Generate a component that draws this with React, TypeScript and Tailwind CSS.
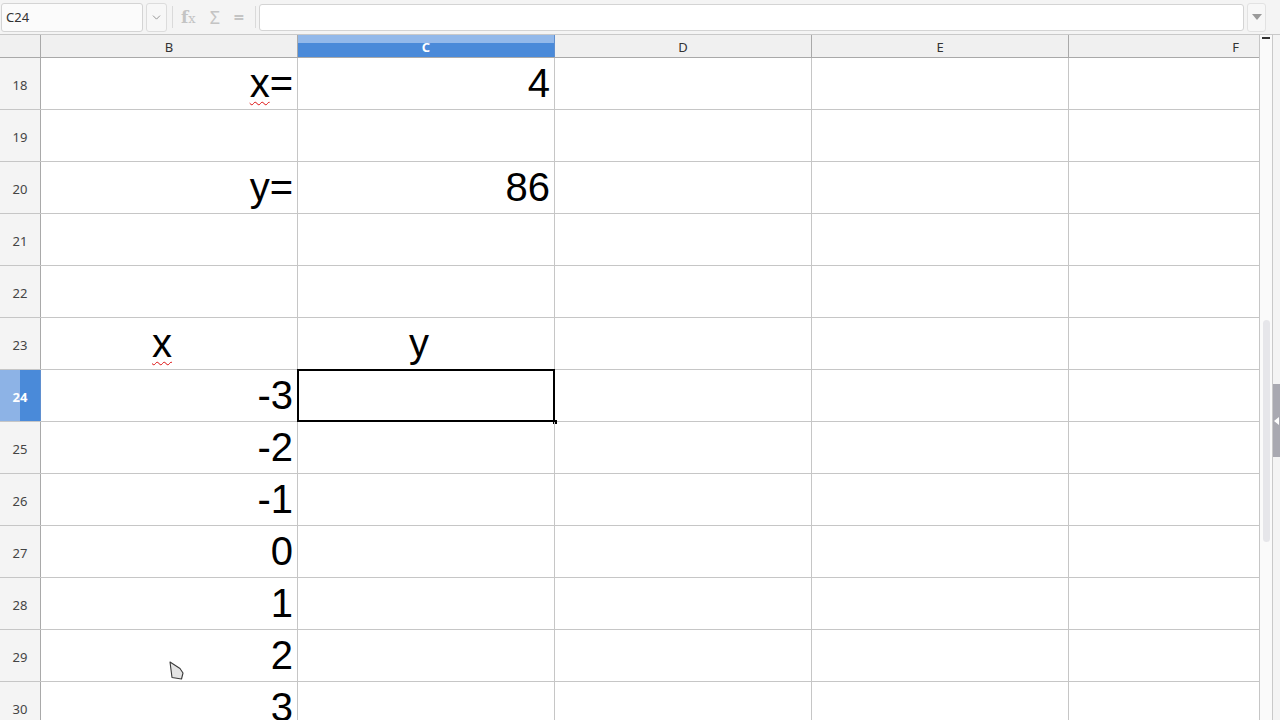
import { ChevronDown } from 'lucide-react'

type Cell = { text?: string; align?: 'right' | 'center'; squiggle?: boolean; tail?: string }
type Row = { n: number; b?: Cell; c?: Cell }

const rows: Row[] = [
  { n: 18, b: { text: 'x', tail: '=', squiggle: true, align: 'right' }, c: { text: '4', align: 'right' } },
  { n: 19 },
  { n: 20, b: { text: 'y=', align: 'right' }, c: { text: '86', align: 'right' } },
  { n: 21 },
  { n: 22 },
  { n: 23, b: { text: 'x', squiggle: true, align: 'center' }, c: { text: 'y', align: 'center' } },
  { n: 24, b: { text: '-3', align: 'right' } },
  { n: 25, b: { text: '-2', align: 'right' } },
  { n: 26, b: { text: '-1', align: 'right' } },
  { n: 27, b: { text: '0', align: 'right' } },
  { n: 28, b: { text: '1', align: 'right' } },
  { n: 29, b: { text: '2', align: 'right' } },
  { n: 30, b: { text: '3', align: 'right' } },
]

const uiFont = "font-['Noto_Sans','Open_Sans',sans-serif]"

function CellText({ cell }: { cell?: Cell }) {
  if (!cell?.text) return null
  return (
    <div
      className={`flex h-full w-full items-end pb-[3px] text-[40px] leading-[46px] text-black font-['Liberation_Sans',Arial,sans-serif] ${
        cell.align === 'center' ? 'justify-center pr-[14px]' : 'justify-end pr-[4px]'
      }`}
    >
      <span className={cell.squiggle ? 'underline decoration-wavy decoration-[#d11] decoration-1 underline-offset-[4px]' : ''}>
        {cell.text}
      </span>
      {cell.tail && <span>{cell.tail}</span>}
    </div>
  )
}

function Toolbar() {
  return (
    <div className={`flex h-[35px] items-center border-b border-[#c9c9c9] bg-[#f4f4f4] ${uiFont}`}>
      {/* name box */}
      <div className="ml-[1px] flex h-[29px] w-[142px] items-center rounded-[3px] border border-[#d4d4d4] bg-[#fbfbfb] pl-[4px] pt-[2px] text-[13px] text-[#333]">
        C24
      </div>
      <div className="ml-[3px] flex h-[29px] w-[21px] items-center justify-center rounded-[3px] border border-[#dcdcdc] bg-[#f7f7f7] text-[#888]">
        <ChevronDown size={13} strokeWidth={1.6} />
      </div>
      <div className="ml-[5px] h-[22px] w-px bg-[#dadada]" />
      {/* function icons, disabled */}
      <div className="ml-[8px] flex w-[20px] items-baseline text-[#c4c4c4] font-['DejaVu_Serif',serif]">
        <span className="text-[17px] font-bold leading-none">f</span>
        <span className="text-[13px] leading-none">x</span>
      </div>
      <div className="ml-[7px] w-[14px] text-center text-[18px] leading-none text-[#c4c4c4]">Σ</div>
      <div className="ml-[11px] w-[12px] text-center text-[18px] font-bold leading-none text-[#c4c4c4]">=</div>
      <div className="ml-[10px] h-[22px] w-px bg-[#dadada]" />
      {/* formula input */}
      <div className="ml-[3px] h-[27px] w-[985px] rounded-[3px] border border-[#d4d4d4] bg-white" />
      <div className="ml-[3px] flex h-[29px] w-[19px] items-center justify-center rounded-[3px] border border-[#e2e2e2] bg-[#f7f7f7]">
        <svg width="10" height="6" viewBox="0 0 10 6">
          <path d="M0 0h10L5 6z" fill="#9a9a9a" />
        </svg>
      </div>
    </div>
  )
}

const colClass = 'w-[257px] shrink-0 border-r'

function HeaderRow() {
  return (
    <div className={`flex h-[23px] shrink-0 border-b border-[#a9a9a9] bg-[#f0f0f0] text-[13px] text-[#333] ${uiFont}`}>
      <div className="w-[41px] shrink-0 border-r border-[#a9a9a9]" />
      <div className={`${colClass} flex items-center justify-center border-[#a9a9a9] pt-[3px]`}>B</div>
      <div
        className={`${colClass} flex items-center justify-center border-[#5f8fcf] bg-[linear-gradient(#93b9ea_0,#93b9ea_36%,#4a8ad9_36%,#4a8ad9_100%)] pt-[3px] font-bold text-white`}
      >
        C
      </div>
      <div className={`${colClass} flex items-center justify-center border-[#a9a9a9] pt-[3px]`}>D</div>
      <div className={`${colClass} flex items-center justify-center border-[#a9a9a9] pt-[3px]`}>E</div>
      <div className="flex w-[190px] shrink-0 items-center justify-end pr-[20px] pt-[3px]">F</div>
    </div>
  )
}

function GridRow({ row }: { row: Row }) {
  const selected = row.n === 24
  return (
    <div className="flex h-[52px] shrink-0 border-b border-[#c6c6c6]">
      <div
        className={`flex w-[41px] shrink-0 items-center justify-center border-r pt-[4px] text-[13px] ${uiFont} ${
          selected
            ? 'border-[#5f8fcf] bg-[linear-gradient(90deg,#8db3e6_0,#8db3e6_50%,#4a8ad9_50%,#4a8ad9_100%)] font-bold text-white'
            : 'border-[#a9a9a9] bg-[#f4f4f4] text-[#444]'
        }`}
      >
        {row.n}
      </div>
      <div className={`${colClass} border-[#c6c6c6]`}>
        <CellText cell={row.b} />
      </div>
      <div className={`${colClass} relative border-[#c6c6c6]`}>
        <CellText cell={row.c} />
        {selected && (
          <>
            <div className="absolute -left-px -top-px h-[53px] w-[258px] border-2 border-black" />
            <div className="absolute -bottom-[3px] -right-[3px] h-[4px] w-[4px] bg-black" />
          </>
        )}
      </div>
      <div className={`${colClass} border-[#c6c6c6]`} />
      <div className={`${colClass} border-[#c6c6c6]`} />
      <div className="w-[190px] shrink-0" />
    </div>
  )
}

export default function App() {
  return (
    <div className="relative flex h-[720px] w-[1280px] flex-col overflow-hidden bg-white">
      <Toolbar />
      <div className="flex min-h-0 flex-1">
        <div className="flex w-[1259px] shrink-0 flex-col overflow-hidden">
          <HeaderRow />
          {rows.map((r) => (
            <GridRow key={r.n} row={r} />
          ))}
        </div>
        {/* vertical scrollbar */}
        <div className="flex w-[13px] shrink-0 flex-col border-l border-[#c6c6c6] bg-[#fafafa]">
          <div className="mx-[2px] mt-[2px] h-[2px] bg-[#333]" />
          <div className="ml-[3px] mt-[281px] h-[222px] w-[7px] rounded-full bg-[#e6e6ea]" />
        </div>
        {/* collapsed sidebar strip */}
        <div className="flex w-[8px] shrink-0 flex-col border-l border-[#c9c9c9] bg-[#f4f4f4]">
          <div className="mt-[349px] flex h-[73px] items-center justify-center bg-[#a9a9b1]">
            <svg width="5" height="8" viewBox="0 0 5 8">
              <path d="M5 0v8L0 4z" fill="#fff" />
            </svg>
          </div>
        </div>
      </div>
      {/* mouse pointer */}
      <svg className="absolute left-[168px] top-[660px]" width="18" height="22" viewBox="0 0 18 22">
        <path d="M2 2L12 8.5L15 13L13.5 19L4 17.5Z" fill="#e4e4e4" stroke="#3a3a3a" strokeWidth="1.1" strokeLinejoin="round" />
      </svg>
    </div>
  )
}
